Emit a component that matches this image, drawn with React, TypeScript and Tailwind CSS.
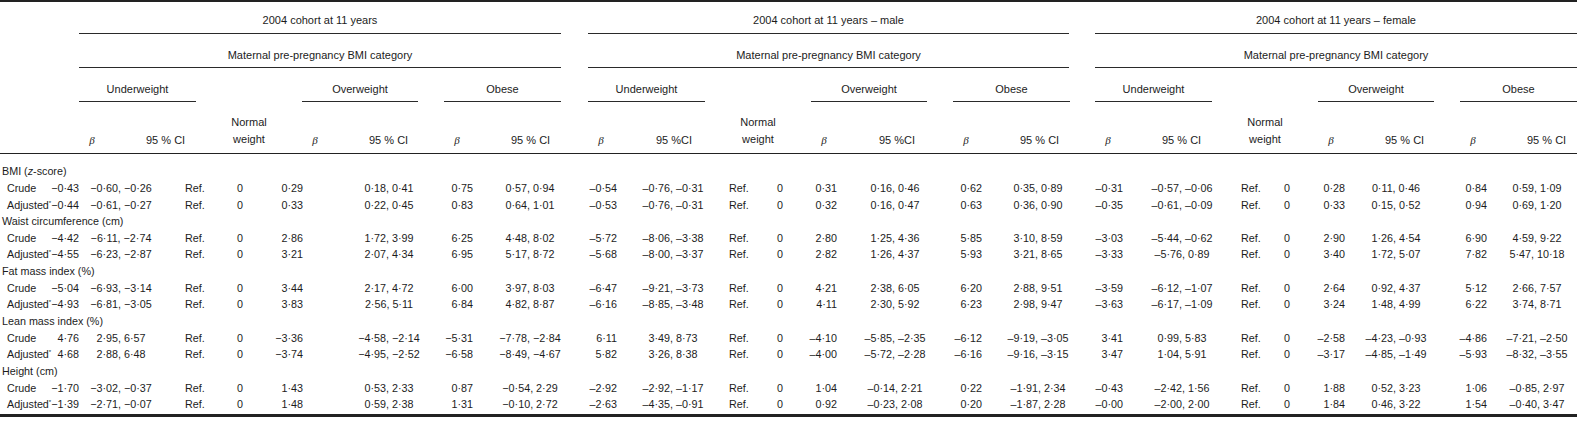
import React from 'react';

type Group = { title: string; ci: [string, string, string] };

const GROUPS: Group[] = [
  { title: '2004 cohort at 11 years', ci: ['95 % CI', '95 % CI', '95 % CI'] },
  { title: '2004 cohort at 11 years – male', ci: ['95 %CI', '95 %CI', '95 % CI'] },
  { title: '2004 cohort at 11 years – female', ci: ['95 % CI', '95 % CI', '95 % CI'] },
];

// one entry per data column, null = spacer
const COLS: (string | null)[] = [
  // 2004 cohort
  'w-[35px] text-right',
  'w-[84px] text-center',
  'w-[58px] pl-[22px] text-left',
  'w-[38px] text-center',
  'w-[44px] text-right',
  null,
  'w-[108px] text-center',
  'w-[30px] text-right',
  'w-[114px] text-center',
  // male
  'w-[30px] text-right',
  'w-[112px] text-center',
  'w-[36px] text-left',
  'w-[30px] text-center',
  'w-[42px] text-right',
  null,
  'w-[96px] text-center',
  'w-[39px] text-right',
  'w-[112px] text-center',
  // female
  'w-[29px] text-right',
  'w-[118px] text-center',
  'w-[29px] text-left',
  'w-[34px] text-center',
  'w-[41px] text-right',
  null,
  'w-[102px] text-center',
  'w-[40px] text-right',
  'w-[100px] text-center',
];

const SPACERS = ['w-[32px]', 'w-[10px]', 'w-[0px]'];

type Row = { section?: React.ReactNode; label?: string; adjusted?: boolean; vals?: string[][] };

const crude = (a: string[], b: string[], c: string[]): Row => ({ label: 'Crude', vals: [a, b, c] });
const adj = (a: string[], b: string[], c: string[]): Row => ({ label: 'Adjusted', adjusted: true, vals: [a, b, c] });

const ROWS: Row[] = [
  { section: <>BMI (<i>z</i>-score)</> },
  crude(
    ['−0·43', '−0·60, −0·26', '0·29', '0·18, 0·41', '0·75', '0·57, 0·94'],
    ['–0·54', '–0·76, –0·31', '0·31', '0·16, 0·46', '0·62', '0·35, 0·89'],
    ['–0·31', '–0·57, –0·06', '0·28', '0·11, 0·46', '0·84', '0·59, 1·09'],
  ),
  adj(
    ['−0·44', '−0·61, −0·27', '0·33', '0·22, 0·45', '0·83', '0·64, 1·01'],
    ['–0·53', '–0·76, –0·31', '0·32', '0·16, 0·47', '0·63', '0·36, 0·90'],
    ['–0·35', '–0·61, –0·09', '0·33', '0·15, 0·52', '0·94', '0·69, 1·20'],
  ),
  { section: 'Waist circumference (cm)' },
  crude(
    ['−4·42', '−6·11, −2·74', '2·86', '1·72, 3·99', '6·25', '4·48, 8·02'],
    ['–5·72', '–8·06, –3·38', '2·80', '1·25, 4·36', '5·85', '3·10, 8·59'],
    ['–3·03', '–5·44, –0·62', '2·90', '1·26, 4·54', '6·90', '4·59, 9·22'],
  ),
  adj(
    ['−4·55', '−6·23, −2·87', '3·21', '2·07, 4·34', '6·95', '5·17, 8·72'],
    ['–5·68', '–8·00, –3·37', '2·82', '1·26, 4·37', '5·93', '3·21, 8·65'],
    ['–3·33', '–5·76, 0·89', '3·40', '1·72, 5·07', '7·82', '5·47, 10·18'],
  ),
  { section: 'Fat mass index (%)' },
  crude(
    ['−5·04', '−6·93, −3·14', '3·44', '2·17, 4·72', '6·00', '3·97, 8·03'],
    ['–6·47', '–9·21, –3·73', '4·21', '2·38, 6·05', '6·20', '2·88, 9·51'],
    ['–3·59', '–6·12, –1·07', '2·64', '0·92, 4·37', '5·12', '2·66, 7·57'],
  ),
  adj(
    ['−4·93', '−6·81, −3·05', '3·83', '2·56, 5·11', '6·84', '4·82, 8·87'],
    ['–6·16', '–8·85, –3·48', '4·11', '2·30, 5·92', '6·23', '2·98, 9·47'],
    ['–3·63', '–6·17, –1·09', '3·24', '1·48, 4·99', '6·22', '3·74, 8·71'],
  ),
  { section: 'Lean mass index (%)' },
  crude(
    ['4·76', '2·95, 6·57', '−3·36', '−4·58, −2·14', '−5·31', '−7·78, −2·84'],
    ['6·11', '3·49, 8·73', '–4·10', '–5·85, –2·35', '–6·12', '–9·19, –3·05'],
    ['3·41', '0·99, 5·83', '–2·58', '–4·23, –0·93', '–4·86', '–7·21, –2·50'],
  ),
  adj(
    ['4·68', '2·88, 6·48', '−3·74', '−4·95, −2·52', '−6·58', '−8·49, −4·67'],
    ['5·82', '3·26, 8·38', '–4·00', '–5·72, –2·28', '–6·16', '–9·16, –3·15'],
    ['3·47', '1·04, 5·91', '–3·17', '–4·85, –1·49', '–5·93', '–8·32, –3·55'],
  ),
  { section: 'Height (cm)' },
  crude(
    ['−1·70', '−3·02, −0·37', '1·43', '0·53, 2·33', '0·87', '−0·54, 2·29'],
    ['–2·92', '–2·92, –1·17', '1·04', '–0·14, 2·21', '0·22', '–1·91, 2·34'],
    ['–0·43', '–2·42, 1·56', '1·88', '0·52, 3·23', '1·06', '–0·85, 2·97'],
  ),
  adj(
    ['−1·39', '−2·71, −0·07', '1·48', '0·59, 2·38', '1·31', '−0·10, 2·72'],
    ['–2·63', '–4·35, –0·91', '0·92', '–0·23, 2·08', '0·20', '–1·87, 2·28'],
    ['–0·00', '–2·00, 2·00', '1·84', '0·46, 3·22', '1·54', '–0·40, 3·47'],
  ),
];

function Beta() {
  return <span className="font-['Liberation_Serif',serif] italic">β</span>;
}

function SubGroup({ name, ci, width }: { name: string; ci: string; width: string }) {
  return (
    <div className={`${width} shrink-0`}>
      <div className="h-[34px] border-b border-[#2a2a2a] pt-[13px] text-center leading-[16px]">{name}</div>
      <div className="flex h-[51px] pt-[30px] leading-[16px]">
        <div className="w-[26px] shrink-0 text-center">
          <Beta />
        </div>
        <div className="ml-[41px] w-[38px] shrink-0 whitespace-nowrap text-center">{ci}</div>
      </div>
    </div>
  );
}

function GroupHeader({ group, width }: { group: Group; width: string }) {
  return (
    <div className={`${width} shrink-0`}>
      <div className="h-[32px] border-b border-[#2a2a2a] pt-[10px] text-center leading-[16px]">{group.title}</div>
      <div className="h-[34px] border-b border-[#2a2a2a] pt-[13px] text-center leading-[16px]">
        Maternal pre-pregnancy BMI category
      </div>
      <div className="flex h-[85px]">
        <SubGroup name="Underweight" ci={group.ci[0]} width="w-[117px]" />
        <div className="w-[106px] shrink-0 pt-[46px] text-center leading-[17px]">
          Normal
          <br />
          weight
        </div>
        <SubGroup name="Overweight" ci={group.ci[1]} width="w-[116px]" />
        <div className="w-[26px] shrink-0" />
        <SubGroup name="Obese" ci={group.ci[2]} width="w-[117px]" />
      </div>
    </div>
  );
}

function DataRow({ row }: { row: Row }) {
  if (row.section) {
    return <div className="flex h-[16.65px] items-center whitespace-nowrap pl-[2px]">{row.section}</div>;
  }
  const cells: string[] = [];
  row.vals!.forEach((g) => cells.push(g[0], g[1], 'Ref.', '0', g[2], g[3], g[4], g[5]));
  let i = 0;
  let s = 0;
  return (
    <div className="flex h-[16.65px] items-center whitespace-nowrap">
      <div className="w-[44px] shrink-0 pl-[7px]">
        {row.label}
        {row.adjusted && <span className="relative -top-[4px] text-[6px]">*</span>}
      </div>
      {COLS.map((cls, k) =>
        cls === null ? (
          <div key={k} className={`${SPACERS[s++]} shrink-0`} />
        ) : (
          <div key={k} className={`${cls} shrink-0`}>
            {cells[i++]}
          </div>
        ),
      )}
    </div>
  );
}

export default function App() {
  return (
    <div className="w-[1577px] overflow-hidden bg-white font-['Liberation_Sans',Arial,sans-serif] text-[11px] text-[#1c1c1c]">
      <div className="w-[1600px] border-t-2 border-b-[3px] border-[#222]">
        <div className="flex border-b border-[#222]">
          <div className="w-[79px] shrink-0" />
          <GroupHeader group={GROUPS[0]} width="w-[482px]" />
          <div className="w-[27px] shrink-0" />
          <GroupHeader group={GROUPS[1]} width="w-[481px]" />
          <div className="w-[26px] shrink-0" />
          <GroupHeader group={GROUPS[2]} width="w-[482px]" />
        </div>
        <div className="pt-[9px] pb-[1px] text-[10.75px]">
          {ROWS.map((r, k) => (
            <DataRow key={k} row={r} />
          ))}
        </div>
      </div>
    </div>
  );
}
